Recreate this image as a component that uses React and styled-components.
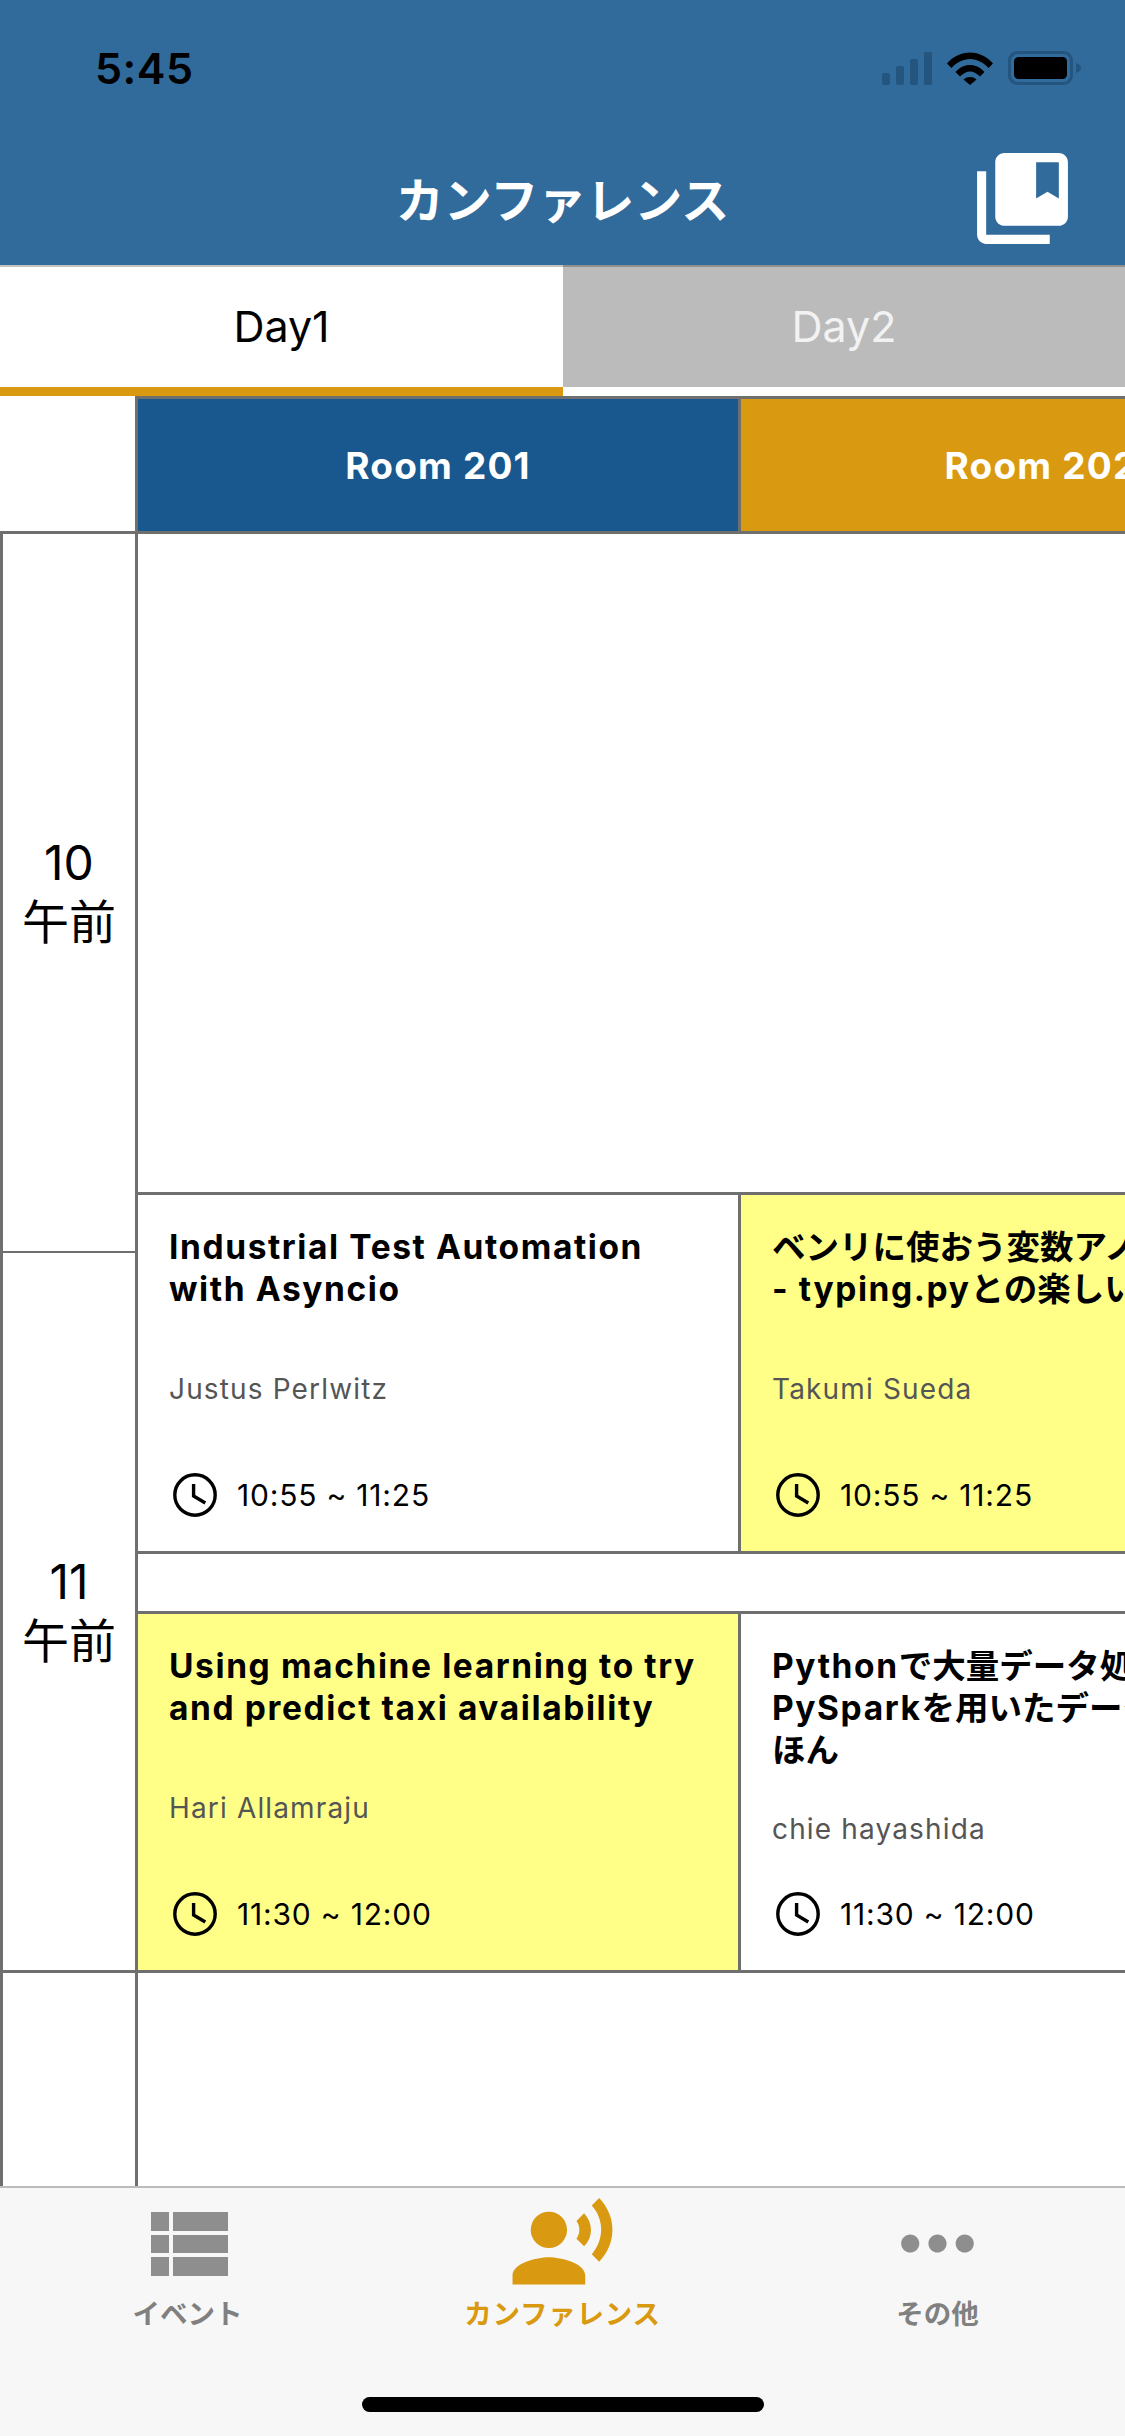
import React from "react";
import styled, { createGlobalStyle } from "styled-components";
import { MdCollectionsBookmark, MdRecordVoiceOver, MdMoreHoriz } from "react-icons/md";

const FONT = '"Inter", "Noto Sans CJK JP", sans-serif';
const LINE = "#6f6f6f";
const ORANGE = "#d99a11";

const Global = createGlobalStyle`
  html, body { margin: 0; padding: 0; background: #fff; overflow: hidden; }
  * { box-sizing: border-box; }
  body { font-family: ${FONT}; }
`;

const Page = styled.div`
  width: 1125px;
  height: 2436px;
  display: flex;
  flex-direction: column;
  overflow: hidden;
  background: #fff;
`;

const Header = styled.header`
  height: 265px;
  flex: none;
  background: #306b9c;
  color: #fff;
`;

const StatusBar = styled.div`
  height: 136px;
  display: flex;
  align-items: center;
  justify-content: space-between;
  padding: 0 44px 0 95px;
`;

const Clock = styled.span`
  font-size: 43px;
  font-weight: 600;
  color: #000;
  letter-spacing: 0.5px;
`;

const StatusIcons = styled.div`
  display: flex;
  align-items: center;
  gap: 15px;
`;

const Nav = styled.div`
  height: 124px;
  display: grid;
  grid-template-columns: 1fr auto 1fr;
  align-items: center;
  padding-right: 48px;
`;

const NavTitle = styled.h1`
  grid-column: 2;
  margin: 0 0 3px 48px;
  font-size: 48px;
  font-weight: 700;
  line-height: 60px;
  font-family: "Noto Sans CJK JP", sans-serif;
`;

const NavAction = styled.div`
  grid-column: 3;
  justify-self: end;
  display: flex;
  font-size: 109px;
  color: #fff;
`;

const Tabs = styled.div`
  height: 131px;
  flex: none;
  display: grid;
  grid-template-columns: 563px 562px;
`;

const Tab = styled.div`
  display: flex;
  align-items: center;
  justify-content: center;
  height: ${(p) => (p.$active ? "131px" : "122px")};
  padding-bottom: 3px;
  font-size: 43px;
  color: ${(p) => (p.$active ? "#000" : "#f2f2f2")};
  background: ${(p) => (p.$active ? "#fff" : "#bbbbbb")};
  border-top: 2px solid ${(p) => (p.$active ? "#c4c4c4" : "#8f8f8f")};
  border-bottom: ${(p) => (p.$active ? `9px solid ${ORANGE}` : "none")};
`;

const Schedule = styled.div`
  flex: 1;
  min-height: 0;
  overflow: hidden;
`;

const RoomRow = styled.div`
  display: flex;
  height: 138px;
`;

const Corner = styled.div`
  flex: none;
  width: 135px;
  border-bottom: 3px solid ${LINE};
`;

const Room = styled.div`
  flex: none;
  width: ${(p) => (p.$first ? "606px" : "603px")};
  display: flex;
  align-items: center;
  justify-content: center;
  white-space: nowrap;
  font-size: 37px;
  letter-spacing: 1.2px;
  font-weight: 700;
  color: #fff;
  background: ${(p) => p.$bg};
  border: 3px solid ${LINE};
  border-left-width: ${(p) => (p.$first ? "3px" : "0")};
`;

const Body = styled.div`
  display: flex;
  height: 1652px;
`;

const TimeColumn = styled.div`
  flex: none;
  width: 138px;
  display: flex;
  flex-direction: column;
  border-left: 3px solid ${LINE};
  border-right: 3px solid ${LINE};
`;

const Hour = styled.div`
  flex: none;
  height: ${(p) => p.$height}px;
  padding-bottom: 4px;
  display: flex;
  flex-direction: column;
  align-items: center;
  justify-content: center;
  border-bottom: ${(p) => p.$line}px solid ${LINE};
`;

const HourNumber = styled.span`
  font-size: 48px;
  line-height: 56px;
  color: #000;
`;

const HourPeriod = styled.span`
  font-family: "Noto Sans CJK JP", sans-serif;
  font-size: 47px;
  line-height: 56px;
  font-weight: 400;
  color: #000;
`;

const Rooms = styled.div`
  flex: none;
  width: 987px;
  display: flex;
  flex-direction: column;
`;

const Gap = styled.div`
  flex: none;
  height: ${(p) => p.$height}px;
`;

const SessionRow = styled.div`
  flex: none;
  height: 362px;
  display: flex;
  border-top: 3px solid ${LINE};
  border-bottom: 3px solid ${LINE};
`;

const Card = styled.article`
  flex: none;
  width: ${(p) => (p.$first ? "603px" : "604px")};
  padding: 31px 31px 30px;
  display: flex;
  flex-direction: column;
  justify-content: space-between;
  background: ${(p) => (p.$hot ? "#ffff88" : "#fff")};
  border-right: ${(p) => (p.$first ? `3px solid ${LINE}` : "none")};
`;

const Title = styled.h2`
  margin: 0;
  font-size: 33.5px;
  line-height: 42px;
  font-weight: 700;
  color: #000;
  white-space: nowrap;
`;

const Latin = styled.span`
  letter-spacing: 1.6px;
`;

const Speaker = styled.p`
  margin: 0;
  font-size: 28px;
  line-height: 34px;
  letter-spacing: 1.15px;
  color: #555;
`;

const TimeRow = styled.div`
  display: flex;
  align-items: center;
  gap: 20px;
  height: 53px;
  padding-left: 4px;
  font-size: 30px;
  letter-spacing: 0.8px;
  color: #000;
`;

const ClockSvg = styled.svg`
  flex: none;
  width: 44px;
  height: 44px;
`;

const TabBar = styled.nav`
  flex: none;
  height: 250px;
  background: #f7f7f7;
  border-top: 2px solid #bcbcbc;
  display: flex;
  flex-direction: column;
  align-items: center;
`;

const TabItems = styled.div`
  width: 100%;
  display: grid;
  grid-template-columns: repeat(3, 1fr);
  padding-top: 1px;
`;

const TabItem = styled.div`
  display: flex;
  flex-direction: column;
  align-items: center;
  color: ${(p) => (p.$active ? ORANGE : "#8e8e8e")};
  font-size: 109px;
  line-height: 0;
`;

const TabLabel = styled.span`
  font-family: "Noto Sans CJK JP", sans-serif;
  font-size: 27.5px;
  line-height: 28px;
  font-weight: 700;
  letter-spacing: ${(p) => (p.$active ? "0.8px" : "0")};
  color: ${(p) => (p.$active ? ORANGE : "#808080")};
`;

const HomeIndicator = styled.div`
  width: 402px;
  height: 15px;
  margin-top: 71px;
  border-radius: 8px;
  background: #000;
`;

const SignalIcon = () => (
  <svg width="50" height="33" viewBox="0 0 50 33" fill="#23557f">
    <rect x="0" y="21" width="8" height="12" rx="2" />
    <rect x="14" y="14" width="8" height="19" rx="2" />
    <rect x="28" y="7" width="8" height="26" rx="2" />
    <rect x="42" y="0" width="8" height="33" rx="2" />
  </svg>
);

const WifiIcon = () => (
  <svg width="46" height="33" viewBox="0 0 46 33" fill="#000">
    <path d="M0 11.5C6 4.5 14 0.5 23 0.5S40 4.5 46 11.5L41.5 16C36.5 10.5 30 7 23 7S9.5 10.5 4.5 16Z" />
    <path d="M8.5 20C12.5 15.5 17.5 13 23 13S33.5 15.5 37.5 20L33 24.5C30 21.5 26.5 19.5 23 19.5S16 21.5 13 24.5Z" />
    <path d="M16.5 27.5C18.3 25.8 20.5 25 23 25S27.7 25.8 29.5 27.5L23 33Z" />
  </svg>
);

const BatteryIcon = () => (
  <svg width="73" height="34" viewBox="0 0 73 34">
    <rect x="1.5" y="1.5" width="62" height="31" rx="8" fill="none" stroke="#23557f" strokeWidth="3" />
    <rect x="6" y="6" width="53" height="22" rx="4.5" fill="#000" />
    <path d="M68 12c3 1 5 2.500 5 5s-2 4-5 5Z" fill="#23557f" />
  </svg>
);

const ClockIcon = () => (
  <ClockSvg viewBox="0 0 44 44" fill="none" stroke="#000" strokeWidth="3.4">
    <circle cx="22" cy="22" r="20.2" />
    <path d="M20.6 11V23L32.3 30" />
  </ClockSvg>
);

const ViewListIcon = () => (
  <svg width="1em" height="1em" viewBox="0 0 109 109" fill="currentColor">
    <rect x="18" y="23" width="18" height="19" />
    <rect x="40" y="23" width="55" height="19" />
    <rect x="18" y="46" width="18" height="18" />
    <rect x="40" y="46" width="55" height="18" />
    <rect x="18" y="68" width="18" height="19" />
    <rect x="40" y="68" width="55" height="19" />
  </svg>
);

const Session = ({ first, hot, title, speaker, time }) => (
  <Card $first={first} $hot={hot}>
    <Title>{title}</Title>
    <Speaker>{speaker}</Speaker>
    <TimeRow>
      <ClockIcon />
      <span>{time}</span>
    </TimeRow>
  </Card>
);

export default function App() {
  return (
    <Page>
      <Global />
      <Header>
        <StatusBar>
          <Clock>5:45</Clock>
          <StatusIcons>
            <SignalIcon />
            <WifiIcon />
            <BatteryIcon />
          </StatusIcons>
        </StatusBar>
        <Nav>
          <NavTitle>カンファレンス</NavTitle>
          <NavAction>
            <MdCollectionsBookmark />
          </NavAction>
        </Nav>
      </Header>
      <Tabs>
        <Tab $active>Day1</Tab>
        <Tab>Day2</Tab>
      </Tabs>
      <Schedule>
        <RoomRow>
          <Corner />
          <Room $first $bg="#18588e">Room 201</Room>
          <Room $bg={ORANGE}>Room 202</Room>
        </RoomRow>
        <Body>
          <TimeColumn>
            <Hour $height={719} $line={2}>
              <HourNumber>10</HourNumber>
              <HourPeriod>午前</HourPeriod>
            </Hour>
            <Hour $height={720} $line={3}>
              <HourNumber>11</HourNumber>
              <HourPeriod>午前</HourPeriod>
            </Hour>
          </TimeColumn>
          <Rooms>
            <Gap $height={658} />
            <SessionRow>
              <Session
                first
                title={<Latin>Industrial Test Automation<br />with Asyncio</Latin>}
                speaker="Justus Perlwitz"
                time="10:55 ~ 11:25"
              />
              <Session
                hot
                title={<>ベンリに使おう変数アノテーション<br /><Latin>- typing.py</Latin>との楽しい開発 -</>}
                speaker="Takumi Sueda"
                time="10:55 ~ 11:25"
              />
            </SessionRow>
            <Gap $height={57} />
            <SessionRow>
              <Session
                first
                hot
                title={<Latin>Using machine learning to try<br />and predict taxi availability</Latin>}
                speaker="Hari Allamraju"
                time="11:30 ~ 12:00"
              />
              <Session
                title={<><Latin>Python</Latin>で大量データ処理！<br /><Latin>PySpark</Latin>を用いたデータ分析のき<br />ほん</>}
                speaker="chie hayashida"
                time="11:30 ~ 12:00"
              />
            </SessionRow>
          </Rooms>
        </Body>
      </Schedule>
      <TabBar>
        <TabItems>
          <TabItem>
            <ViewListIcon />
            <TabLabel>イベント</TabLabel>
          </TabItem>
          <TabItem $active>
            <MdRecordVoiceOver />
            <TabLabel $active>カンファレンス</TabLabel>
          </TabItem>
          <TabItem>
            <MdMoreHoriz />
            <TabLabel>その他</TabLabel>
          </TabItem>
        </TabItems>
        <HomeIndicator />
      </TabBar>
    </Page>
  );
}
